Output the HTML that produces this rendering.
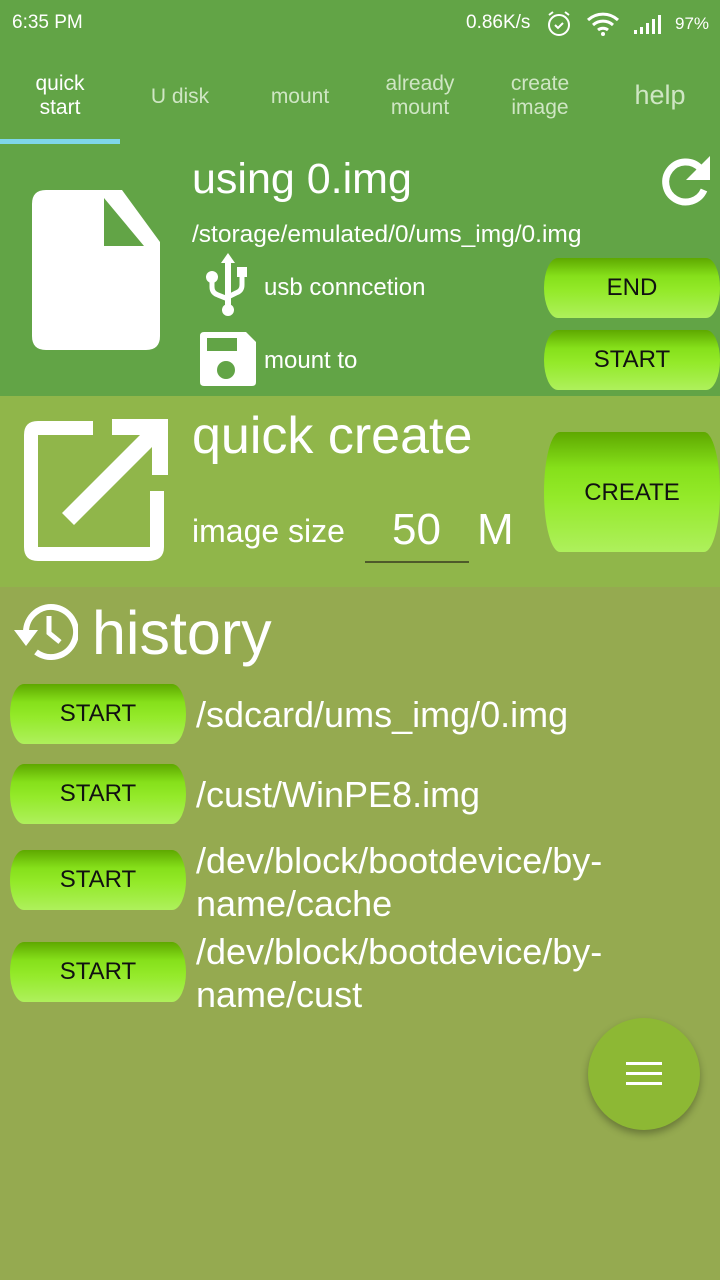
<!DOCTYPE html>
<html><head><meta charset="utf-8"><style>
*{margin:0;padding:0;box-sizing:border-box}
body{width:720px;height:1280px;overflow:hidden;font-family:"Liberation Sans",sans-serif;color:#fff;background:#95aa50;position:relative}
.abs{position:absolute}
#top{left:0;top:0;width:720px;height:396px;background:#62a446}
#qc{left:0;top:396px;width:720px;height:191px;background:#90b64a}
.btn{position:absolute;border-radius:14px/50%;background:linear-gradient(#5ea800 0%,#86e01a 30%,#94ea2a 55%,#aef05c 100%);color:#111;text-align:center;font-size:24px}
.tab{position:absolute;top:72px;width:120px;text-align:center;font-size:21px;line-height:24px;color:#cfe6c4}
.h{font-size:36px;white-space:nowrap}
</style></head><body>
<div id="top" class="abs"></div>
<div id="qc" class="abs"></div>
<div class="abs" style="left:12px;top:12px;font-size:19px">6:35 PM</div>
<div class="abs" style="left:466px;top:12px;font-size:19px">0.86K/s</div>
<svg class="abs" style="left:546px;top:10px" width="26" height="28" viewBox="0 0 26 28"><circle cx="13" cy="15" r="10" fill="none" stroke="#fff" stroke-width="2"/><path d="M9 15l3 3 5-5M3 5l4-3M23 5l-4-3" stroke="#fff" stroke-width="2" fill="none"/></svg>
<svg class="abs" style="left:586px;top:12px" width="34" height="24" viewBox="0 0 34 24"><path d="M2 8a22 22 0 0 1 30 0M7 13a15 15 0 0 1 20 0M12 18a8 8 0 0 1 10 0" stroke="#fff" stroke-width="3" fill="none"/><circle cx="17" cy="22" r="2" fill="#fff"/></svg>
<svg class="abs" style="left:632px;top:12px" width="34" height="24"><g fill="#fff"><rect x="2" y="18" width="3" height="4"/><rect x="8" y="15" width="3" height="7"/><rect x="14" y="11" width="3" height="11"/><rect x="20" y="7" width="3" height="15"/><rect x="26" y="3" width="3" height="19"/></g></svg>
<div class="abs" style="left:675px;top:14px;font-size:17px">97%</div>
<div class="tab" style="left:0;color:#fff">quick<br>start</div>
<div class="tab" style="left:120px;top:85px">U disk</div>
<div class="tab" style="left:240px;top:85px">mount</div>
<div class="tab" style="left:360px">already<br>mount</div>
<div class="tab" style="left:480px">create<br>image</div>
<div class="tab" style="left:600px;top:83px;font-size:27px">help</div>
<div class="abs" style="left:0;top:139px;width:120px;height:5px;background:#7fd6ea"></div>
<svg class="abs" style="left:32px;top:190px" width="128" height="160" viewBox="0 0 128 160"><path d="M14 0H90L128 52V146Q128 160 114 160H14Q0 160 0 146V14Q0 0 14 0Z" fill="#fff"/><path d="M72 8V56H112Z" fill="#62a446"/></svg>
<div class="abs h" style="left:192px;top:155px;font-size:43px">using 0.img</div>
<svg class="abs" style="left:656px;top:154px" width="56" height="54" viewBox="0 0 56 54"><path d="M44 14A20 20 0 1 0 48 36" stroke="#fff" stroke-width="7" fill="none"/><path d="M54 2V26H30Z" fill="#fff"/></svg>
<div class="abs" style="left:192px;top:221px;font-size:24.5px;white-space:nowrap">/storage/emulated/0/ums_img/0.img</div>
<svg class="abs" style="left:204px;top:253px" width="48" height="64" viewBox="0 0 48 64"><path d="M24 0L17 10H31Z" fill="#fff"/><rect x="21" y="8" width="6" height="48" fill="#fff"/><circle cx="24" cy="57" r="6" fill="#fff"/><circle cx="8" cy="24" r="6" fill="#fff"/><path d="M8 24V34Q8 40 14 42L24 46M38 20V32Q38 38 32 40L24 44" stroke="#fff" stroke-width="5" fill="none"/><rect x="33" y="14" width="10" height="10" fill="#fff"/></svg>
<div class="abs" style="left:264px;top:274px;font-size:24px">usb conncetion</div>
<svg class="abs" style="left:200px;top:332px" width="56" height="54" viewBox="0 0 56 54"><path d="M4 0H46L56 10V50Q56 54 52 54H4Q0 54 0 50V4Q0 0 4 0Z" fill="#fff"/><rect x="7" y="6" width="30" height="13" fill="#62a446"/><circle cx="26" cy="38" r="9" fill="#62a446"/></svg>
<div class="abs" style="left:264px;top:347px;font-size:24px">mount to</div>
<div class="btn" style="left:544px;top:258px;width:176px;height:60px;line-height:60px">END</div>
<div class="btn" style="left:544px;top:330px;width:176px;height:60px;line-height:60px">START</div>
<svg class="abs" style="left:24px;top:419px" width="144" height="146" viewBox="0 0 144 146"><path d="M71 2H16Q2 2 2 16V128Q2 142 16 142H126Q142 142 142 128V72H128V128H16V16H71Z" fill="#fff" transform="translate(-2,0)"/><path d="M88 0H144V56H128V28L50 106L38 94L116 16H88Z" fill="#fff"/></svg>
<div class="abs h" style="left:192px;top:406px;font-size:52px">quick create</div>
<div class="abs" style="left:192px;top:513px;font-size:32px">image size</div>
<div class="abs" style="left:392px;top:505px;font-size:44px">50</div>
<div class="abs" style="left:365px;top:561px;width:104px;height:2px;background:#4e5a2a"></div>
<div class="abs" style="left:477px;top:505px;font-size:44px">M</div>
<div class="btn" style="left:544px;top:432px;width:176px;height:120px;line-height:122px;border-radius:16px/50%">CREATE</div>
<svg class="abs" style="left:12px;top:602px" width="66" height="58" viewBox="0 0 66 58"><path d="M14 30A25 25 0 1 1 24 50" stroke="#fff" stroke-width="6" fill="none"/><path d="M2 28H26L14 44Z" fill="#fff"/><path d="M37 14V31L48 40" stroke="#fff" stroke-width="5" fill="none"/></svg>
<div class="abs h" style="left:92px;top:598px;font-size:61px">history</div>
<div class="btn" style="left:10px;top:684px;width:176px;height:60px;line-height:60px">START</div>
<div class="abs" style="left:196px;top:694px;font-size:36px;white-space:nowrap">/sdcard/ums_img/0.img</div>
<div class="btn" style="left:10px;top:764px;width:176px;height:60px;line-height:60px">START</div>
<div class="abs" style="left:196px;top:774px;font-size:36px">/cust/WinPE8.img</div>
<div class="btn" style="left:10px;top:850px;width:176px;height:60px;line-height:60px">START</div>
<div class="abs" style="left:196px;top:839px;font-size:36px;line-height:43px;white-space:nowrap">/dev/block/bootdevice/by-<br>name/cache</div>
<div class="btn" style="left:10px;top:942px;width:176px;height:60px;line-height:60px">START</div>
<div class="abs" style="left:196px;top:930px;font-size:36px;line-height:43px;white-space:nowrap">/dev/block/bootdevice/by-<br>name/cust</div>
<div class="abs" style="left:588px;top:1018px;width:112px;height:112px;border-radius:50%;background:#8db834;box-shadow:0 4px 8px rgba(0,0,0,.3)"></div>
<div class="abs" style="left:626px;top:1062px;width:36px;height:3px;background:#fff;box-shadow:0 10px 0 #fff,0 20px 0 #fff"></div>
</body></html>
